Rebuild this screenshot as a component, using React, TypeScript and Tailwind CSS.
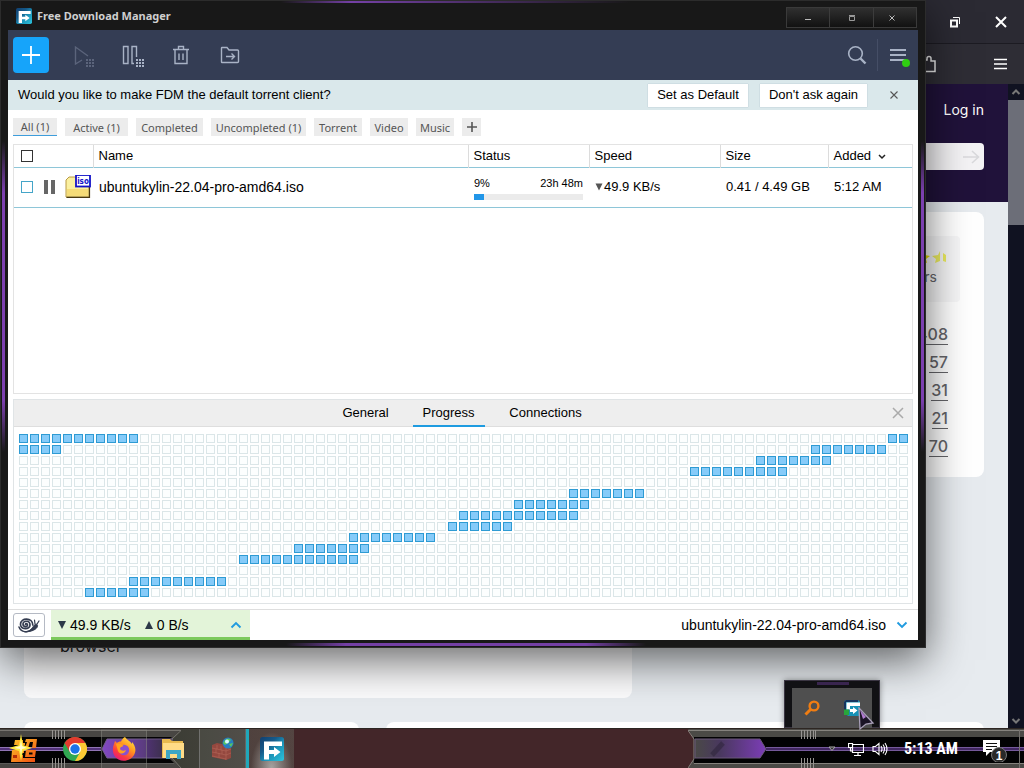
import React from "react";

const SANS = "font-['Liberation_Sans',Arial,sans-serif]";
const UI = "font-['Noto_Sans',Tahoma,sans-serif]";

/* Downloaded ranges of the piece map: [row, first column, last column] */
const COLUMNS = 81;
const ROWS = 15;
const RANGES: [number, number, number][] = [
  [0, 0, 10],
  [0, 79, 80],
  [1, 0, 3],
  [1, 72, 78],
  [2, 67, 73],
  [3, 61, 69],
  [5, 50, 56],
  [6, 45, 51],
  [7, 40, 50],
  [8, 39, 44],
  [9, 30, 37],
  [10, 25, 31],
  [11, 20, 30],
  [13, 10, 18],
  [14, 6, 11],
];

const PIECES = Array.from({ length: COLUMNS * ROWS }, (_, i) => {
  const row = Math.floor(i / COLUMNS);
  const col = i % COLUMNS;
  return RANGES.some(([r, a, b]) => r === row && col >= a && col <= b);
});

function FdmLogo({ className }: { className: string }) {
  return (
    <svg viewBox="0 0 24 24" className={className} aria-hidden="true">
      <defs>
        <linearGradient id="fdm" x1="0" y1="0" x2="1" y2="1">
          <stop offset="0" stopColor="#123f70" />
          <stop offset="0.35" stopColor="#155a8a" />
          <stop offset="0.6" stopColor="#1c93b8" />
          <stop offset="1" stopColor="#2cc4dc" />
        </linearGradient>
      </defs>
      <rect width="24" height="24" rx="2.500" fill="url(#fdm)" />
      <path d="M4 4.500H22V9H9V13H14V10L20.500 15L14 20V17H9V22.500H4Z" fill="#fff" />
    </svg>
  );
}

function TitleBar() {
  return (
    <header className="flex h-[30px] shrink-0 items-start justify-between pl-[7px]">
      <div className="flex h-8 items-center gap-[5px] pl-2">
        <FdmLogo className="size-4" />
        <h1 className={`${UI} text-[11px] font-bold text-[#cfcfcf]`}>Free Download Manager</h1>
      </div>
      <div className="mt-[7px] mr-2 flex h-[21px] border border-[#3a3a3a] bg-gradient-to-b from-[#303030] to-[#121212]">
        <button aria-label="Minimize" className="flex w-[43px] items-center justify-center border-r border-[#3c3c3c]">
          <svg viewBox="0 0 10 10" className="size-[10px]"><path d="M2 6.5H8" stroke="#bbb" /></svg>
        </button>
        <button aria-label="Maximize" className="flex w-[44px] items-center justify-center border-r border-[#3c3c3c]">
          <svg viewBox="0 0 10 10" className="size-[10px]"><path d="M2.5 3.5H7.5V7.5H2.5ZM2 2.5H8" fill="none" stroke="#999" /></svg>
        </button>
        <button aria-label="Close" className="flex w-[42px] items-center justify-start pl-[13px]">
          <svg viewBox="0 0 10 10" className="size-[10px]"><path d="M2.5 2.5L7.5 7.5M7.5 2.5L2.5 7.5" stroke="#bbb" /></svg>
        </button>
      </div>
    </header>
  );
}

function Dots({ x, y }: { x: number; y: number }) {
  return (
    <g fill="currentColor" stroke="none">
      {[0, 1, 2].map((r) =>
        [0, 1, 2].map((c) => <rect key={`${r}${c}`} x={x + c * 3} y={y + r * 3} width="2" height="2" />)
      )}
    </g>
  );
}

function Toolbar() {
  const icon = "size-6 fill-none stroke-current stroke-[1.4]";
  return (
    <div className="flex h-[50px] shrink-0 items-center bg-[#343d54] pl-[5px] text-[#a9b3c6]">
      <button aria-label="Add download" className="flex size-9 items-center justify-center rounded bg-[#16a4fa] text-white">
        <svg viewBox="0 0 24 24" className="size-6"><path d="M12 3V21M3 12H21" stroke="currentColor" strokeWidth="1.8" /></svg>
      </button>
      <div className="ml-[22px] flex items-center gap-[25px]">
        <button aria-label="Start" className="text-[#5b647b]">
          <svg viewBox="0 0 24 24" className={icon}><path d="M11 17L4.500 21V4L17 13" /><Dots x={15} y={16} /></svg>
        </button>
        <button aria-label="Pause">
          <svg viewBox="0 0 24 24" className={icon}><path d="M3.500 3.500H8V20.500H3.500ZM14 20.500H12V3.500H16.500V14" /><Dots x={16} y={16} /></svg>
        </button>
        <button aria-label="Delete">
          <svg viewBox="0 0 24 24" className={icon}><path d="M4 6.500H20M9.500 6V3.500H14.500V6M6 7V20.500H18V7M10 10.500V17M14 10.500V17" /></svg>
        </button>
        <button aria-label="Open folder">
          <svg viewBox="0 0 24 24" className={icon}><path d="M4 4.500H9L11 7H19.500Q20.500 7 20.500 8V18.500Q20.500 19.500 19.500 19.500H4Q3.500 19.500 3.500 19V5Q3.500 4.500 4 4.500ZM8 13.500H16M13.500 10.500L16.500 13.500L13.500 16.500" /></svg>
        </button>
      </div>
      <button aria-label="Search" className="ml-auto">
        <svg viewBox="0 0 24 24" className="size-6 fill-none stroke-current stroke-[1.6]"><circle cx="10.500" cy="10.500" r="6.800" /><path d="M15.500 15.500L20.500 20.500" strokeWidth="2.400" /></svg>
      </button>
      <span className="ml-2 h-8 w-px bg-[#454e66]" />
      <button aria-label="Menu" className="mr-2 ml-2 flex">
        <svg viewBox="0 0 24 24" className="size-6"><path d="M4 7H20M4 12H20M4 17H20" stroke="currentColor" strokeWidth="1.8" /><circle cx="20" cy="20" r="4" fill="#2fce12" /></svg>
      </button>
    </div>
  );
}

function Banner() {
  return (
    <div className="flex h-[30px] shrink-0 items-center bg-[#dae8eb] pr-[19px] pl-[10px] text-black">
      <p className="flex-1">Would you like to make FDM the default torrent client?</p>
      <button className="h-[23px] w-[100px] bg-white shadow-[0_0_1px_#9ab]">Set as Default</button>
      <button className="ml-3 h-[23px] w-[107px] bg-white shadow-[0_0_1px_#9ab]">Don't ask again</button>
      <button aria-label="Dismiss" className="ml-[22px] text-[#555]">
        <svg viewBox="0 0 10 10" className="size-[10px]"><path d="M1.500 1.500L8.500 8.500M8.500 1.500L1.500 8.500" stroke="currentColor" strokeWidth="1.100" /></svg>
      </button>
    </div>
  );
}

const FILTERS = [
  { label: "All (1)", width: "w-11", active: true },
  { label: "Active (1)", width: "w-[63px]" },
  { label: "Completed", width: "w-[67px]" },
  { label: "Uncompleted (1)", width: "w-[95px]" },
  { label: "Torrent", width: "w-12" },
  { label: "Video", width: "w-[38px]" },
  { label: "Music", width: "w-[38px]" },
];

function Filters() {
  return (
    <nav className={`${UI} flex h-[34px] shrink-0 items-center gap-2 pl-[5px] text-[11px] text-[#555]`}>
      {FILTERS.map((f) => (
        <button
          key={f.label}
          className={`${f.width} h-[18px] whitespace-nowrap bg-[#ececec] leading-[17px] ${f.active ? "border-b border-[#3e9ddb]" : ""}`}
        >
          {f.label}
        </button>
      ))}
      <button aria-label="Add tag" className="flex h-[18px] w-[19px] items-center justify-center bg-[#ececec]">
        <svg viewBox="0 0 12 12" className="size-3"><path d="M6 1V11M1 6H11" stroke="#555" strokeWidth="1.600" /></svg>
      </button>
    </nav>
  );
}

function IsoIcon() {
  return (
    <svg viewBox="0 0 26 24" className="h-6 w-[26px]" aria-hidden="true">
      <path d="M1 5L4 2H10L12 4H24V22H1Z" fill="#fbf0a0" stroke="#b99a45" />
      <path d="M1.500 22.300H24.500V5" fill="none" stroke="#4a3a10" strokeWidth="1.200" />
      <path d="M2 14H23V21H2Z" fill="#f5dc78" />
      <rect x="11" y="0" width="14" height="11.500" fill="#fff" stroke="#1212c8" strokeWidth="1.800" />
      <text x="18" y="9" textAnchor="middle" fontSize="8" fontWeight="bold" fill="#1212c8" fontFamily="DejaVu Sans Condensed, DejaVu Sans, sans-serif">iso</text>
    </svg>
  );
}

function Downloads() {
  const head = "border-l border-[#dcdcdc] pl-[5px] text-left font-normal";
  return (
    <section className="mx-[5px] flex-1 border border-[#e3e3e3]">
      <table className="w-full table-fixed border-collapse text-black">
        <colgroup>
          <col className="w-[79px]" />
          <col />
          <col className="w-[121px]" />
          <col className="w-[131px]" />
          <col className="w-[108px]" />
          <col className="w-[84px]" />
        </colgroup>
        <thead>
          <tr className="h-[22px] border-b border-[#8ec6d8]">
            <th className="pl-[7px] text-left">
              <input type="checkbox" aria-label="Select all" className="block size-3 appearance-none border border-[#333] bg-white" />
            </th>
            <th className={head}>Name</th>
            <th className={head}>Status</th>
            <th className={head}>Speed</th>
            <th className={head}>Size</th>
            <th className={head}>
              <span className="flex items-center gap-[6px]">
                Added
                <svg viewBox="0 0 10 10" className="size-[10px]"><path d="M2 4L5 7L8 4" fill="none" stroke="#222" strokeWidth="1.500" /></svg>
              </span>
            </th>
          </tr>
        </thead>
        <tbody>
          <tr className="h-10 border-b border-[#8ec6d8]">
            <td className="pl-[7px]">
              <div className="flex items-center">
                <input type="checkbox" aria-label="Select ubuntukylin-22.04-pro-amd64.iso" className="size-3 appearance-none border border-[#45a5c8] bg-white" />
                <button aria-label="Pause download" className="mr-[9px] ml-[10px] flex">
                  <svg viewBox="0 0 13 16" className="h-4 w-[13px]"><path d="M1 1H5V15H1ZM8 1H12V15H8Z" fill="#666" /></svg>
                </button>
                <IsoIcon />
              </div>
            </td>
            <td className="truncate pl-[6px] text-sm">ubuntukylin-22.04-pro-amd64.iso</td>
            <td className="pr-[6px] pl-[6px] text-[11px]">
              <div className="flex justify-between leading-4">
                <span>9%</span>
                <span>23h 48m</span>
              </div>
              <div className="mt-[3px] h-[6px] bg-[#ebebeb]">
                <div className="h-full w-[9%] bg-[#2196e8]" />
              </div>
            </td>
            <td className="pl-[6px]">
              <span className="flex items-center gap-px">
                <svg viewBox="0 0 8 8" className="size-2"><path d="M0.500 0.500H7.500L4 7.500Z" fill="#555" /></svg>
                49.9 KB/s
              </span>
            </td>
            <td className="pl-[6px]">0.41 / 4.49 GB</td>
            <td className="pl-[6px]">5:12 AM</td>
          </tr>
        </tbody>
      </table>
    </section>
  );
}

function Details() {
  return (
    <section className="mx-[5px] mt-[5px] shrink-0 border border-[#e0e4e6]">
      <div className="flex h-[27px] items-center border-b border-[#dedede] bg-[#eeeeee] text-black">
        <div className="flex flex-1 justify-center gap-[11px] pl-[17px]">
          <button className="h-[27px] w-[72px]">General</button>
          <button className="h-[27px] w-[72px] border-b-2 border-[#1e9be0] pt-[2px]">Progress</button>
          <button className="ml-[2px] h-[27px] w-24">Connections</button>
        </div>
        <button aria-label="Close details" className="mr-2 flex">
          <svg viewBox="0 0 12 12" className="size-3"><path d="M1 1L11 11M11 1L1 11" stroke="#aaa" strokeWidth="1.500" /></svg>
        </button>
      </div>
      <div className="grid grid-cols-[repeat(auto-fill,9px)] gap-[2px] pt-[7px] pb-[6px] pl-[5px]">
        {PIECES.map((done, i) => (
          <i key={i} className={`h-[9px] border ${done ? "border-[#2e9bd3] bg-[#86cbf9]" : "border-[#dbe6e8] bg-[#fcfefe]"}`} />
        ))}
      </div>
    </section>
  );
}

function StatusBar() {
  return (
    <footer className="mt-[5px] flex h-[31px] shrink-0 items-stretch border-t border-[#dedede] text-sm text-black">
      <button aria-label="Snail mode" className="my-[3px] mr-[6px] ml-[5px] flex w-8 items-center justify-center rounded-[3px] border border-[#b5bac4]">
        <svg viewBox="0 0 24 18" className="h-[18px] w-6 fill-none stroke-[#343c50]" strokeLinecap="round">
          <path d="M8.500 8.500C8.500 7 10.500 7.200 10.500 9C10.500 11.300 6 11.300 6 8C6 4.300 13 4 13 9C13 14 3.500 13.800 3.500 8.300C3.500 1.200 15.800 1.200 15.800 9" strokeWidth="1.700" />
          <path d="M2 11C4 16.500 11 17 15 13.500" strokeWidth="1.500" />
          <path d="M8 15.800C13 15.800 15 12 17 9.500C18.500 7.500 21 8 20.500 10.300C20 13 15 16 8 15.800Z" fill="#343c50" strokeWidth="1" />
          <path d="M18 8L17.500 4M20 8L22 5" strokeWidth="1.200" />
        </svg>
      </button>
      <button className="flex w-[199px] items-center border-b-[3px] border-[#7cc95c] bg-[#e3f4d9] pt-[2px] pr-[8px] pl-[7px]">
        <svg viewBox="0 0 8 8" className="mr-1 size-2"><path d="M0 0H8L4 8Z" fill="#2c3848" /></svg>
        49.9 KB/s
        <svg viewBox="0 0 8 8" className="mr-1 ml-[14px] size-2"><path d="M0 8H8L4 0Z" fill="#2c3848" /></svg>
        0 B/s
        <svg viewBox="0 0 12 8" className="ml-auto h-2 w-3"><path d="M1.500 6.500L6 2L10.500 6.500" fill="none" stroke="#219be0" strokeWidth="1.900" /></svg>
      </button>
      <button className="ml-auto flex items-center gap-[10px] pr-[10px]">
        ubuntukylin-22.04-pro-amd64.iso
        <svg viewBox="0 0 12 8" className="h-2 w-3"><path d="M1.500 1.500L6 6L10.500 1.500" fill="none" stroke="#219be0" strokeWidth="1.900" /></svg>
      </button>
    </footer>
  );
}

function ManagerWindow() {
  return (
    <main className="absolute top-0 right-[98px] bottom-[120px] left-0 flex flex-col border border-[#2c2c2c] bg-[#181818] shadow-[0_12px_40px_rgba(0,0,0,0.6)]">
      <div className="pointer-events-none absolute top-0 left-[280px] h-[2px] w-[350px] bg-gradient-to-r from-transparent via-[#7440a5] via-20% to-transparent" />
      <div className="pointer-events-none absolute bottom-px left-[285px] flex h-[3px] w-[360px]">
        <span className="w-1/6 bg-gradient-to-r from-transparent to-[#7440a5]" />
        <span className="flex-1 bg-[#7440a5]" />
        <span className="w-1/6 bg-gradient-to-l from-transparent to-[#7440a5]" />
      </div>
      <div className="pointer-events-none absolute top-[140px] bottom-[195px] left-px flex w-[3px] flex-col">
        <span className="h-1/6 bg-gradient-to-b from-transparent to-[#7c40b0]" />
        <span className="flex-1 bg-[#7c40b0]" />
        <span className="h-1/6 bg-gradient-to-t from-transparent to-[#7c40b0]" />
      </div>
      <div className="pointer-events-none absolute top-[140px] right-px bottom-[195px] flex w-[3px] flex-col">
        <span className="h-1/6 bg-gradient-to-b from-transparent to-[#7c40b0]" />
        <span className="flex-1 bg-[#7c40b0]" />
        <span className="h-1/6 bg-gradient-to-t from-transparent to-[#7c40b0]" />
      </div>
      <div className="-mt-px flex min-h-0 flex-1 flex-col">
        <TitleBar />
        <div className={`${SANS} mx-[7px] mb-[7px] flex min-h-0 flex-1 flex-col bg-white text-[13px]`}>
          <Toolbar />
          <Banner />
          <Filters />
          <Downloads />
          <Details />
          <StatusBar />
        </div>
      </div>
    </main>
  );
}

function Browser() {
  return (
    <div className="flex min-h-0 flex-1 flex-col">
      <div className="flex h-11 shrink-0 items-center justify-end gap-[34px] border-b border-[#1c1b22] bg-[#2b2a33] pr-[17px] text-white">
        <button aria-label="Restore window" className="flex">
          <svg viewBox="0 0 12 12" className="size-3"><path d="M2 4.500H8V10.500H2Z" fill="none" stroke="#fff" strokeWidth="2" /><path d="M4 1.500H10.500V8" fill="none" stroke="#fff" /></svg>
        </button>
        <button aria-label="Close window" className="flex">
          <svg viewBox="0 0 12 12" className="size-3"><path d="M1 1L11 11M11 1L1 11" stroke="#fff" strokeWidth="2" /></svg>
        </button>
      </div>
      <div className="flex h-10 shrink-0 items-center justify-end bg-[#2e2d35] pr-[17px]">
        <svg viewBox="0 0 16 18" className="mr-[57px] h-[18px] w-4" aria-hidden="true"><path d="M1 5H6V3.500Q6 1.500 8 1.500T10 3.500V6H14V16.500H4V12" fill="none" stroke="#eee" strokeWidth="1.500" /></svg>
        <button aria-label="Application menu" className="flex">
          <svg viewBox="0 0 13 12" className="h-3 w-[13px]"><path d="M0 1.500H13M0 6H13M0 10.500H13" stroke="#fff" strokeWidth="1.400" /></svg>
        </button>
      </div>
      <div className="flex min-h-0 flex-1">
        <div className="flex min-w-0 flex-1 flex-col overflow-hidden bg-[#e7ebef]">
          <div className="flex h-[118px] shrink-0 flex-col items-end bg-[#20123a] pt-4 pr-6">
            <a href="#login" className="font-['Inter',sans-serif] text-sm leading-5 text-white">Log in</a>
            <div className="mt-[23px] flex h-[27px] w-80 items-center justify-end rounded bg-[#f4f3f5] pr-1">
              <svg viewBox="0 0 18 18" className="size-[18px]" aria-hidden="true"><path d="M1 9H17M10 3L16.500 9L10 15" fill="none" stroke="#d9d9dc" strokeWidth="1.600" /></svg>
            </div>
          </div>
          <div className="flex shrink-0 items-start gap-6 px-6 pt-[10px]">
            <section className="flex h-[486px] w-[608px] flex-col justify-end rounded-lg bg-[#fbfbfc] pb-[42px] pl-9 font-['Inter',sans-serif] text-base leading-5 text-[#222]">
              browser
            </section>
            <section className="flex h-[265px] flex-1 flex-col items-end rounded-lg bg-white pr-6 pt-6 font-['Inter',sans-serif] text-[#656569]">
              <div className="flex h-[66px] w-60 flex-col items-end rounded bg-[#f7f7f8] pt-[14px] pr-[14px]">
                <svg viewBox="0 0 30 14" className="h-[14px] w-[30px]" aria-hidden="true"><path d="M6 1L9 5L14 6L10 9L11 13L6 11L2 13L3 8L0 5L5 5Z" fill="#e7dd00" /><path d="M24 1V11L19 13L20 9L16 6L22 5ZM27 3L30 5V12L27 11Z" fill="#eeee60" /></svg>
                <span className="mt-px mr-[9px] text-sm leading-6">Users</span>
              </div>
              <ul className="mt-[18px] mr-3 text-right text-base leading-7 font-medium">
                {["408", "57", "31", "21", "70"].map((n) => (
                  <li key={n}><a href="#stats" className="border-b border-[#656569]">{n}</a></li>
                ))}
              </ul>
            </section>
          </div>
          <div className="mt-6 flex shrink-0 gap-[27px] px-6">
            <div className="h-20 w-[335px] rounded-lg bg-white" />
            <div className="h-20 flex-1 rounded-lg bg-white" />
          </div>
        </div>
        <div className="flex w-4 shrink-0 flex-col items-center bg-[#101221] text-[#777]">
          <svg viewBox="0 0 10 10" className="my-[3px] size-[10px] shrink-0"><path d="M1.500 7L5 3.500L8.500 7" fill="none" stroke="currentColor" strokeWidth="2" /></svg>
          <div className="h-[125px] w-full shrink-0 bg-[#6c6e78]" />
          <svg viewBox="0 0 10 10" className="mt-auto mb-[2px] size-[10px] shrink-0"><path d="M1.500 3L5 6.500L8.500 3" fill="none" stroke="currentColor" strokeWidth="2" /></svg>
        </div>
      </div>
    </div>
  );
}

function TrayPopup() {
  return (
    <div className="absolute right-36 bottom-10 h-12 w-24 border border-[#3a3542] bg-[#111114] px-[7px] pt-[7px] shadow-[0_0_6px_rgba(0,0,0,0.4)]">
      <div className="absolute top-px left-8 h-[3px] w-8 bg-[#39254f]" />
      <div className="flex h-10 items-center justify-between bg-[#4f4f4f] px-3">
        <button aria-label="Search tool" className="flex">
          <svg viewBox="0 0 16 16" className="size-4"><circle cx="10" cy="6" r="4.400" fill="none" stroke="#f07d12" strokeWidth="2.400" /><path d="M7 9L1.500 14.500" stroke="#f07d12" strokeWidth="3" /></svg>
        </button>
        <button aria-label="Free Download Manager" className="flex">
          <svg viewBox="0 0 16 16" className="size-4"><path d="M2 0H14L16 2V16H4L0 12V2Z" fill="#1690b5" /><path d="M0 2L2 0H14V2H2V10H0Z" fill="#15345f" /><path d="M2.500 2.500H16V6H6V9.500H2.500ZM6 9H9V7L13.500 10.500L9 14V12H6Z" fill="#fff" /><path d="M0 9.500H5V15H0Z" fill="#28a53c" /></svg>
        </button>
      </div>
    </div>
  );
}

function Cursor() {
  return (
    <svg viewBox="0 0 18 24" className="absolute right-[149px] bottom-[37px] h-6 w-[18px]" aria-hidden="true">
      <path d="M2 1L16 16L9 17L3 22Z" fill="#1b1426" stroke="#a9a0b9" strokeWidth="1.300" />
      <path d="M3 3L9 10L6 12Z" fill="#b07cd0" />
    </svg>
  );
}

function Chrome() {
  return (
    <svg viewBox="0 0 24 24" className="size-6">
      <circle cx="12" cy="12" r="12" fill="#31a852" />
      <path d="M12 12L1.600 6A12 12 0 0 1 22.400 6H12Z" fill="#e33b2e" />
      <path d="M12 6H22.400A12 12 0 0 1 12 24L17.200 15Z" fill="#fcc934" />
      <path d="M1.600 6L6.800 15L12 12V6Z" fill="#e33b2e" />
      <circle cx="12" cy="12" r="6" fill="#fff" />
      <circle cx="12" cy="12" r="4.700" fill="#1b73e8" />
    </svg>
  );
}

function Firefox() {
  return (
    <svg viewBox="0 0 24 24" className="size-6">
      <defs>
        <linearGradient id="fox" x1="0.900" y1="0" x2="0.200" y2="1">
          <stop offset="0" stopColor="#fff04a" />
          <stop offset="0.400" stopColor="#ff9a1f" />
          <stop offset="0.750" stopColor="#fb3a42" />
          <stop offset="1" stopColor="#e31587" />
        </linearGradient>
      </defs>
      <path d="M13 0C15 3 18 4 20 7L20 5C23 8 24.500 13 22.500 17C20 23 12 25.500 6.500 22.500C1 19.500-.5 13 2 7L3 4L5 6C6 5 7 4.500 9 4.500C10 2.500 11 1 13 0Z" fill="url(#fox)" />
      <circle cx="12" cy="13" r="5.200" fill="#8950cf" />
      <path d="M4 7C7 6 10 7 11.500 9C10 9.500 8 10 8 12C9 14 12 14 14 13C13 17 8 18 6 14Z" fill="#ffa01f" />
    </svg>
  );
}

function TaskbarSkinLeft() {
  return (
    <svg viewBox="0 0 294 40" className="absolute top-0 left-0 h-10 w-[294px]" aria-hidden="true">
      <defs>
        <linearGradient id="pod" x1="0" x2="1"><stop offset="0" stopColor="#7b3fc0" /><stop offset="0.400" stopColor="#623397" /><stop offset="1" stopColor="#33303a" /></linearGradient>
        <linearGradient id="olive" x1="0" x2="1"><stop offset="0" stopColor="#3c3d35" /><stop offset="1" stopColor="#4f4a45" /></linearGradient>
      </defs>
      <rect width="294" height="40" fill="#484643" />
      <path d="M181 0H294V40H181L172 30V10Z" fill="url(#olive)" />
      <path d="M0 8H172L170 10V30L174 34H0Z" fill="#020203" />
      <path d="M0 1.500H181L172 10V29L181 39" fill="none" stroke="#77746f" />
      <path d="M0 34.500H174" stroke="#5a5957" />
      <path d="M0 18.500H101M0 21.500H101" stroke="#8f73b4" />
      <path d="M0 20H101" stroke="#52327a" strokeWidth="2" />
      <path d="M107 10H172V29H107L102 20Z" fill="url(#pod)" stroke="#6d5886" />
      <path d="M52.500 1V10M55.500 1V10M58.500 1V10M61.500 1V10M64.500 1V10M52.500 29V40M55.500 29V40M58.500 29V40M61.500 29V40M64.500 29V40" stroke="#969390" />
      <path d="M199.500 1V39M146.500 1V39M101.500 1V39" stroke="#81807a" opacity="0.500" />
    </svg>
  );
}

function TaskbarSkinRight() {
  return (
    <svg viewBox="0 0 336 40" className="absolute top-0 right-0 h-10 w-[336px]" aria-hidden="true">
      <defs>
        <linearGradient id="podr" x1="0" x2="1"><stop offset="0" stopColor="#4a4947" /><stop offset="0.350" stopColor="#49385e" /><stop offset="1" stopColor="#7c3db7" /></linearGradient>
      </defs>
      <path d="M0 0H336V40H0L6 30V10Z" fill="#4b4a46" />
      <path d="M6 8H336V34H6Z" fill="#020203" />
      <path d="M0 1.500L6 10V30L0 39M0 1.500H336M6 34.500H336" fill="none" stroke="#85827d" />
      <path d="M7 10H72L78 20L72 29H7Z" fill="url(#podr)" stroke="#6a597b" />
      <path d="M24 26L35 14" stroke="#2b2237" strokeWidth="5" opacity="0.500" />
      <path d="M78 18.500H336M78 21.500H336" stroke="#75599b" />
      <path d="M78 20H336" stroke="#412761" strokeWidth="2" />
      <path d="M113.500 1V10M116.500 1V10M119.500 1V10M122.500 1V10M125.500 1V10M127.500 1V10M113.500 29V40M116.500 29V40M119.500 29V40M122.500 29V40M125.500 29V40" stroke="#969390" />
      <path d="M331.500 1V39" stroke="#74716d" />
    </svg>
  );
}

function Taskbar() {
  return (
    <footer className="relative flex h-10 shrink-0 items-stretch border-t border-[#2d2622] bg-[#432629]">
      <TaskbarSkinLeft />
      <TaskbarSkinRight />
      <nav className="relative flex flex-1 items-center">
        <button aria-label="Start" className="ml-[9px] flex w-[30px] justify-center">
          <svg viewBox="0 0 30 30" className="size-[30px]">
            <defs><linearGradient id="start" x1="0" y1="0" x2="1" y2="1"><stop offset="0" stopColor="#ffc629" /><stop offset="1" stopColor="#ef4c12" /></linearGradient></defs>
            <path d="M17 5H28L27 14H23L24 8H21L19 14H16L18 8H16ZM6 6H14V9H16V11H5ZM3 16H15V19H11V21H14V24H26V28H2ZM17 16H27L26 23H16ZM20 18.500V20.500H23.500V18.500Z" fill="url(#start)" fillRule="evenodd" />
            <path d="M4 21H8V24H4Z" fill="#b52e08" />
            <path d="M12 0L14 11L23 14L14 17L12 27L10 17L0 14L10 11Z" fill="#ffe93a" />
            <path d="M12 6L13 12L18 14L13 15L12 21L11 15L5 14L11 12Z" fill="#fffbd0" />
          </svg>
        </button>
        <button aria-label="Chrome" className="ml-6 flex"><Chrome /></button>
        <button aria-label="Firefox" className="ml-[14px] flex h-full w-[46px] items-center justify-center bg-white/5"><Firefox /></button>
        <button aria-label="File Explorer" className="ml-[14px] flex">
          <svg viewBox="0 0 24 22" className="h-[22px] w-6"><path d="M1 1H9L11 3H22V20H1Z" fill="#e8b94f" /><path d="M2 5H23V20H2Z" fill="#ffdb87" /><path d="M5 21V12H20V21H16V16H9V21Z" fill="#3da6c6" /></svg>
        </button>
        <button aria-label="Network firewall" className="ml-[14px] flex h-full w-[47px] items-center justify-center border-x border-[#777]/60 bg-white/5">
          <svg viewBox="0 0 24 24" className="size-6">
            <path d="M1 8L6 6L20 9V21L15 23L1 20Z" fill="#94483f" />
            <path d="M1 11L15 14L20 12M1 15L15 18L20 16M1 19L15 22M6 8V12M10 9V13M5 12V16M11 13V17M8 16V20M15 11V23" stroke="#b96c5e" strokeWidth="0.500" fill="none" />
            <circle cx="17" cy="6" r="5.500" fill="#287fc0" /><path d="M14 3Q18 0 20 3L17 6L14 8L12 6ZM18 7L22 6L20 10Z" fill="#55c761" /><circle cx="16" cy="4.500" r="2" fill="#d8f8ff" />
          </svg>
        </button>
        <button aria-label="Free Download Manager" className="flex h-full w-12 items-center justify-center border-l-3 border-[#20a8ba] bg-[radial-gradient(ellipse_at_bottom,rgba(255,255,255,0.5),rgba(90,60,60,0.4)_65%)]"><FdmLogo className="size-6" /></button>
      </nav>
      <div className="relative flex items-center text-white">
        <button aria-label="Show hidden icons" className="mr-3 flex"><svg viewBox="0 0 8 6" className="h-[6px] w-2"><path d="M1 1H7L4 4.500Z" fill="#333" stroke="#aaa" /></svg></button>
        <button aria-label="Network" className="mr-2 flex"><svg viewBox="0 0 16 14" className="h-[14px] w-4"><path d="M5 2.500H15.500V10.500H4.500V6M10 11V13M6 13.500H13M0.500 1.500H4.500V5.500H0.500ZM2.500 6V9H4" fill="none" stroke="#fff" strokeWidth="1.200" /></svg></button>
        <button aria-label="Volume" className="flex"><svg viewBox="0 0 16 14" className="h-[14px] w-4"><path d="M1 4.500H3.500L7 1.500V12.500L3.500 9.500H1ZM9 4Q11 7 9 10M11 2.500Q14 7 11 11.500M13 1Q17 7 13 13" fill="none" stroke="#fff" strokeWidth="1.100" /></svg></button>
        <time className="w-[94px] pr-2 text-center font-['Roboto_Condensed','Liberation_Sans',sans-serif] text-base font-bold whitespace-nowrap">5:13 AM</time>
        <button aria-label="Notifications, 1 new" className="mr-[16px] flex">
          <svg viewBox="0 0 26 26" className="size-[26px]">
            <path d="M1 4H18V16H8L4 20V16H1Z" fill="#fff" /><path d="M4 7.500H15M4 10.500H15M4 13.500H10" stroke="#111" />
            <circle cx="17" cy="19" r="7.500" fill="#292929" stroke="#777" />
            <text x="17" y="23.500" textAnchor="middle" fontSize="12" fontWeight="bold" fill="#fff" fontFamily="Liberation Sans, sans-serif">1</text>
          </svg>
        </button>
      </div>
    </footer>
  );
}

export default function App() {
  return (
    <div className={`${SANS} relative flex h-screen flex-col overflow-hidden bg-[#e7ebef]`}>
      <Browser />
      <ManagerWindow />
      <TrayPopup />
      <Taskbar />
      <Cursor />
    </div>
  );
}
